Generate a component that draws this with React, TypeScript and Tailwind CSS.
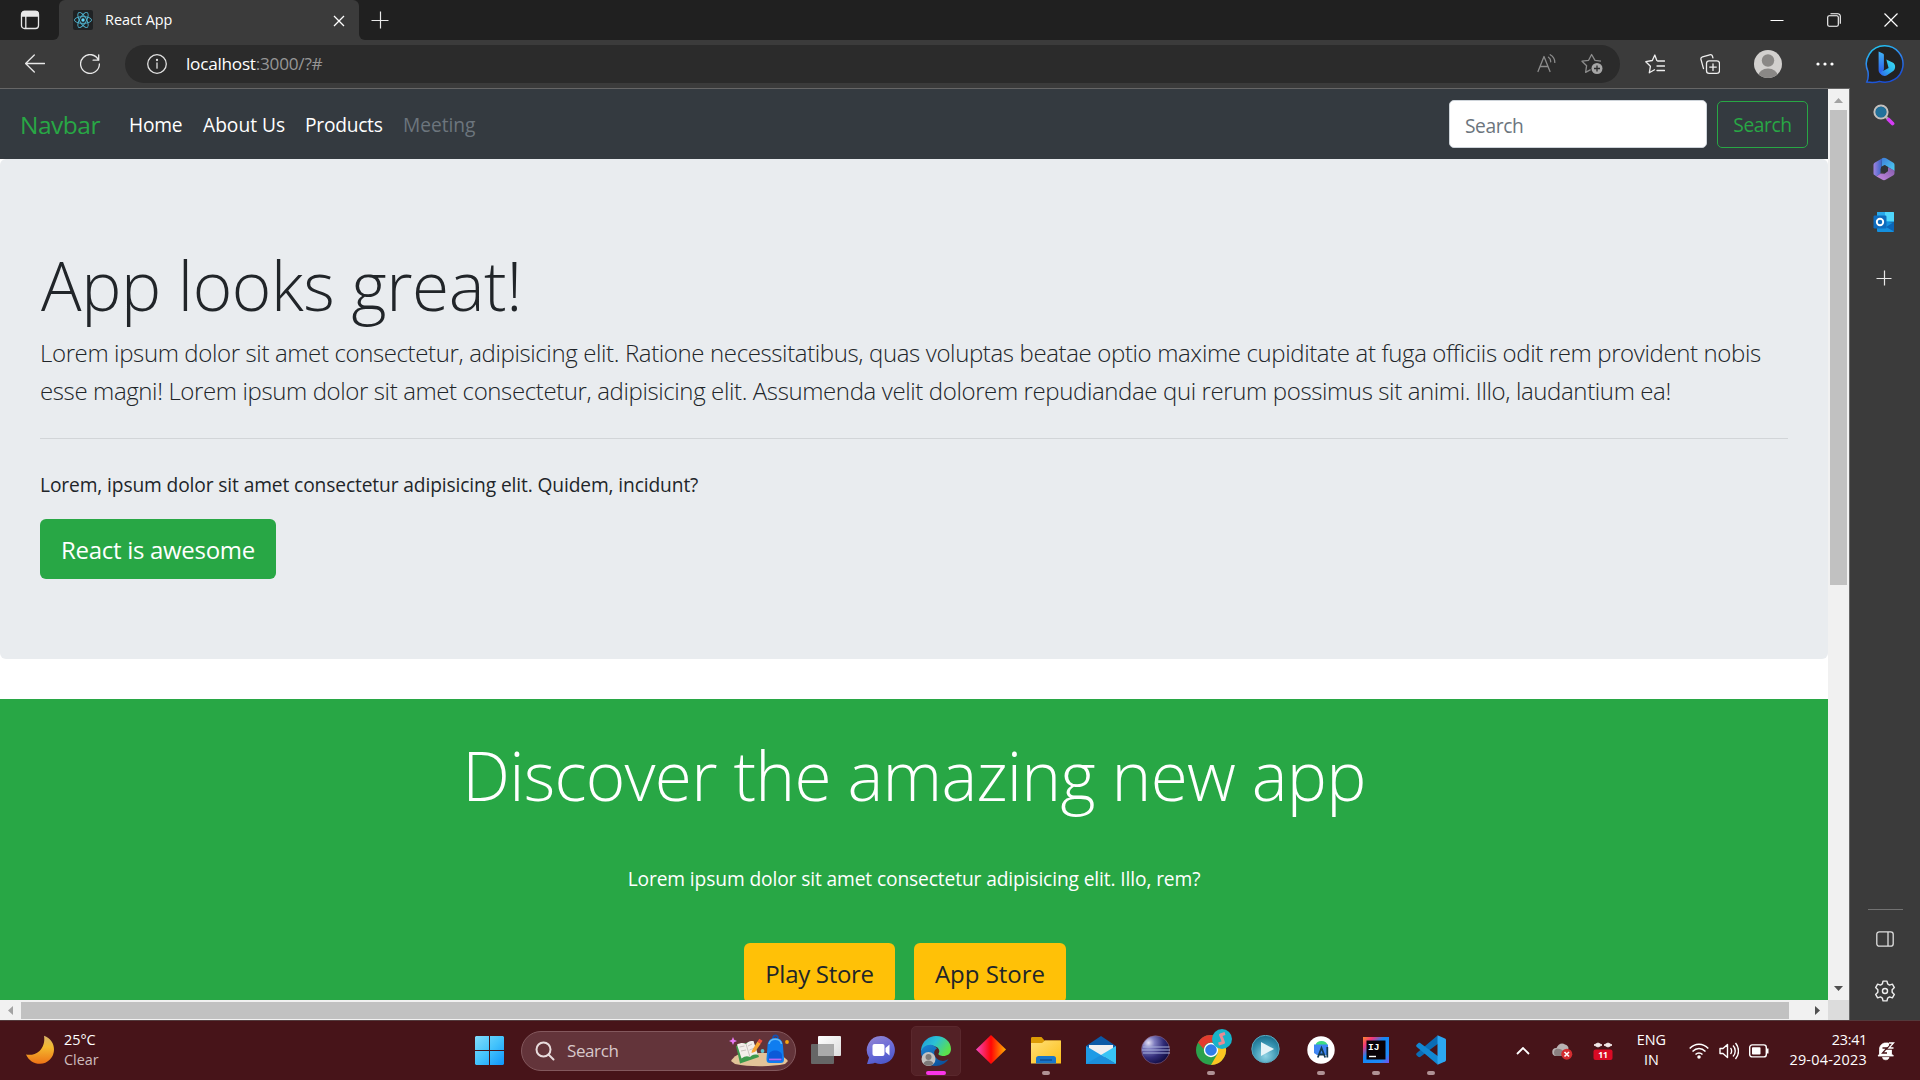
import React from 'react';

type P = { children?: React.ReactNode; className?: string };

/* Line-drawn icon on a 20px grid */
function Line({ children, className = 'size-5 text-white' }: P) {
  return (
    <svg viewBox="0 0 20 20" fill="none" stroke="currentColor" strokeWidth="1.3" strokeLinecap="round" strokeLinejoin="round" className={`shrink-0 ${className}`}>
      {children}
    </svg>
  );
}

function TitleBar() {
  return (
    <header className="flex h-10 shrink-0 bg-[#3b3b3b]">
      <div className="flex w-[59px] items-center rounded-br-[6px] bg-[#202020] pl-[20px]">
        <Line className="size-5 text-[#e8e8e8]">
          <rect x="1.500" y="1.500" width="17" height="17" rx="3" />
          <path d="M2 3.500a2 2 0 012-2h12a2 2 0 012 2V6H2z" fill="currentColor" />
          <path d="M5.800 6v12" />
        </Line>
      </div>
      <div className="w-[300px] bg-[#202020]">
        <div className="flex h-full items-center rounded-t-[6px] bg-[#3b3b3b] pr-[14px] pl-[14px]">
          <svg viewBox="0 0 20 20" className="size-5">
            <rect width="20" height="20" rx="2" fill="#1f2224" />
            <g fill="none" stroke="#4fb3cf" strokeWidth=".9">
              <ellipse cx="10" cy="10" rx="8.600" ry="3.400" />
              <ellipse cx="10" cy="10" rx="8.600" ry="3.400" transform="rotate(60 10 10)" />
              <ellipse cx="10" cy="10" rx="8.600" ry="3.400" transform="rotate(120 10 10)" />
            </g>
            <circle cx="10" cy="10" r="1.700" fill="#61dafb" />
          </svg>
          <span className="ml-3 pb-[1px] text-[14.4px] leading-5 text-white">React App</span>
          <svg viewBox="0 0 12 12" className="mt-[1px] ml-auto size-3 stroke-white" strokeWidth="1.300">
            <path d="M1 1l10 10M11 1L1 11" />
          </svg>
        </div>
      </div>
      <div className="flex flex-1 items-center rounded-bl-[6px] bg-[#202020] pr-[22px] pb-[1px] pl-[12px]">
        <svg viewBox="0 0 18 18" className="size-[18px] stroke-[#e8e8e8]" strokeWidth="1.200">
          <path d="M9.500 .5v17M.5 9.500h17" />
        </svg>
        <div className="ml-auto flex items-center gap-[43px] text-white">
          <svg viewBox="0 0 14 14" className="size-[14px] stroke-white" strokeWidth="1"><path d="M.5 7.500h13" /></svg>
          <svg viewBox="0 0 14 14" className="size-[14px] fill-none stroke-white" strokeWidth="1.100">
            <rect x=".7" y="2.700" width="10.600" height="10.600" rx="1.500" />
            <path d="M3.500.7h7.300a2.500 2.500 0 012.500 2.500v7.600" />
          </svg>
          <svg viewBox="0 0 14 14" className="size-[14px] stroke-white" strokeWidth="1.200"><path d="M.5.5l13 13M13.500.5l-13 13" /></svg>
        </div>
      </div>
    </header>
  );
}

function Toolbar() {
  return (
    <div className="flex h-12 items-center bg-[#3b3b3b] pr-4 pl-[25px]">
      <Line className="size-5 text-[#e8e8e8]"><path d="M.6 9.500h19M9.300 1L.6 9.500 9.300 18" /></Line>
      <Line className="ml-[35px] size-5 text-[#e8e8e8]">
        <path d="M18.600 6.200A9.400 9.400 0 1019.400 10M18.700.8v5.400h-5.600" />
      </Line>
      <div className="ml-[25px] flex h-[38px] w-[1495px] items-center rounded-full bg-[#2b2b2b] pr-[17px] pl-[22px]">
        <Line className="size-5 text-[#e0e0e0]">
          <circle cx="10" cy="10" r="9.300" />
          <path d="M10 9v5.200" />
          <circle cx="10" cy="6" r=".5" fill="currentColor" />
        </Line>
        <p className="ml-[19px] text-[17.200px] leading-6 tracking-[-0.25px] text-white">
          localhost<span className="text-[#969696]">:3000/?#</span>
        </p>
        <Line className="ml-auto size-5 text-[#8c8c8c]">
          <path d="M1 17.500L7 2.500l6 15M3 12.500h8" />
          <path d="M11.500 3.200c1.600 1 2.300 2.600 2.200 4.600M13.200.8c3 1.700 4.600 4.300 4.600 7.600" />
        </Line>
        <svg viewBox="0 0 22 22" className="ml-[24px] size-[22px] fill-none stroke-[#8c8c8c]" strokeWidth="1.300" strokeLinejoin="round">
          <path d="M20 8.200l-6-.9L10.600 1.500 7.600 7.300l-6.600.9 4.600 4.500-1 6.700 5-2.800" />
          <circle cx="16" cy="15.500" r="5.500" fill="#a6a6a6" stroke="none" />
          <path d="M16 12.500v6M13 15.500h6" stroke="#2b2b2b" />
        </svg>
      </div>
      <div className="ml-[25px] flex items-center">
        <Line className="size-5 text-[#eee]">
          <path d="M13 7.200L11.800 6.500 9.800 1 7.300 6.500.8 7.700l4.600 4.600-1.100 6.500 5.200-3M13 7h6.500M12 12h7.500M12 16.500h7.500" />
        </Line>
        <Line className="ml-[35px] size-5 text-[#eee]">
          <rect x="6.500" y="6.800" width="13" height="12.500" rx="2.600" />
          <path d="M13 9.800v6.600M9.700 13.100h6.600M3.500 14.700L1 5.600a2.300 2.300 0 011.500-2.800L9.700.8a2.300 2.300 0 012.800 1.500l.4 1.500" />
        </Line>
        <svg viewBox="0 0 28 28" className="ml-[34px] size-7">
          <defs><clipPath id="avatar"><circle cx="14" cy="14" r="14" /></clipPath></defs>
          <g clipPath="url(#avatar)">
            <rect width="28" height="28" fill="#d2d0ce" />
            <circle cx="14" cy="10.500" r="6.200" fill="#8a8886" />
            <ellipse cx="14" cy="26" rx="9.800" ry="7.500" fill="#8a8886" />
          </g>
        </svg>
        <svg viewBox="0 0 18 4" className="ml-[34px] h-1 w-[18px] fill-white">
          <circle cx="2" cy="2" r="1.600" /><circle cx="9" cy="2" r="1.600" /><circle cx="16" cy="2" r="1.600" />
        </svg>
      </div>
    </div>
  );
}

function Navbar() {
  return (
    <nav className="flex h-[70px] items-center bg-[#343a40] px-5 text-[19.2px]">
      <a className="w-[79px] text-[24.5px] leading-[37px] tracking-[-0.5px] text-[#28a745]">Navbar</a>
      <div className="ml-[30px] flex gap-[20px] pt-[2px] leading-[30px] whitespace-nowrap text-white">
        <a className="w-[54px] tracking-[-0.2px]">Home</a>
        <a className="w-[82px]">About Us</a>
        <a className="w-[78px] tracking-[-0.25px]">Products</a>
        <a className="tracking-[-0.05px] text-[#6c757d]">Meeting</a>
      </div>
      <div className="ml-auto flex items-center gap-[10px]">
        <div className="h-[48px] w-[258px] rounded-[5px] border border-[#ced4da] bg-white px-[15px] pt-[2px] leading-[46px] tracking-[-0.4px] text-[#6c757d]">Search</div>
        <button className="h-[47px] w-[91px] rounded-[5px] border border-[#28a745] pt-[1px] leading-[43px] tracking-[-0.4px] text-[#28a745]">Search</button>
      </div>
    </nav>
  );
}

function Jumbotron() {
  return (
    <section className="h-[500px] rounded-[6px] bg-[#e9ecef] px-[40px] pt-[80px] text-[#212529]">
      <h1 className="h-[94px] pt-[4px] pl-[1px] text-[67.5px] leading-[84px] font-light tracking-[-0.4px]">App looks great!</h1>
      <div className="h-[105px] pt-[1px] text-[24px] leading-[37.5px] font-light whitespace-nowrap">
        <p className="tracking-[-0.372px]">Lorem ipsum dolor sit amet consectetur, adipisicing elit. Ratione necessitatibus, quas voluptas beatae optio maxime cupiditate at fuga officiis odit rem provident nobis</p>
        <p className="tracking-[-0.38px]">esse magni! Lorem ipsum dolor sit amet consectetur, adipisicing elit. Assumenda velit dolorem repudiandae qui rerum possimus sit animi. Illo, laudantium ea!</p>
      </div>
      <hr className="border-[#d2d5d8]" />
      <p className="mt-[31px] text-[19.2px] leading-[30px] tracking-[-0.12px]">Lorem, ipsum dolor sit amet consectetur adipisicing elit. Quidem, incidunt?</p>
      <button className="mt-[19px] h-[60px] w-[236px] rounded-[6px] bg-[#28a745] pt-[1px] text-[24px] leading-[58px] tracking-[-0.3px] text-white">React is awesome</button>
    </section>
  );
}

function Discover() {
  return (
    <section className="mt-[40px] h-[340px] bg-[#28a745] pt-[30px] text-center text-white">
      <h1 className="h-[134px] pt-[4px] text-[67.5px] leading-[84px] font-light tracking-[-0.75px]">Discover the amazing new app</h1>
      <p className="text-[19.2px] leading-[32px] tracking-[-0.12px]">Lorem ipsum dolor sit amet consectetur adipisicing elit. Illo, rem?</p>
      <div className="mt-[48px] flex justify-center text-[24px] leading-[59px] text-[#212529]">
        <button className="mr-[19px] h-[60px] w-[151px] rounded-[6px] bg-[#ffc107] pt-[1px] tracking-[-0.3px]">Play Store</button>
        <button className="mr-[18px] h-[60px] w-[152px] rounded-[6px] bg-[#ffc107] pt-[1px] tracking-[-0.02px]">App Store</button>
      </div>
    </section>
  );
}

function VerticalScroll() {
  return (
    <div className="flex w-[21px] flex-col items-center bg-[#f1f1f1] pr-[1px]">
      <svg viewBox="0 0 9 5" className="mt-[9px] mb-[7px] h-[5px] w-[9px] fill-[#a3a3a3]"><path d="M4.500 0L9 5H0z" /></svg>
      <div className="h-[475px] w-[17px] bg-[#c1c1c1]" />
      <svg viewBox="0 0 9 5" className="mt-auto mb-[9px] h-[5px] w-[9px] fill-[#505050]"><path d="M4.500 5L9 0H0z" /></svg>
    </div>
  );
}

function HorizontalScroll() {
  return (
    <div className="flex h-[20px] bg-[#f1f1f1]">
      <div className="flex w-[1828px] items-center">
        <svg viewBox="0 0 5 9" className="mr-[8px] ml-[8px] h-[9px] w-[5px] fill-[#a3a3a3]"><path d="M0 4.500L5 0v9z" /></svg>
        <div className="h-[17px] w-[1768px] bg-[#c1c1c1]" />
        <svg viewBox="0 0 5 9" className="ml-[26px] h-[9px] w-[5px] fill-[#505050]"><path d="M5 4.500L0 0v9z" /></svg>
      </div>
      <div className="flex-1 bg-[#dcdcdc]" />
    </div>
  );
}

function Sidebar() {
  return (
    <aside className="flex w-[70px] flex-col items-center bg-[#3b3b3b] pt-[4px]">
      <svg viewBox="0 0 40 40" className="size-10">
        <defs>
          <linearGradient id="ring" x1="0" y1="0" x2=".4" y2="1"><stop offset="0" stopColor="#1fd3ee" /><stop offset=".5" stopColor="#2f86f0" /><stop offset="1" stopColor="#1a4fd6" /></linearGradient>
          <linearGradient id="bing" x1="0" y1="0" x2="0" y2="1"><stop offset="0" stopColor="#3fb4f6" /><stop offset="1" stopColor="#2a56e8" /></linearGradient>
          <linearGradient id="bing2" x1="1" y1="0" x2="0" y2="1"><stop offset="0" stopColor="#3de0f0" /><stop offset=".5" stopColor="#2cb5ee" /><stop offset="1" stopColor="#2f62ec" /></linearGradient>
        </defs>
        <path d="M20 1.800a18.200 18.200 0 11-5.500 35.600c-3.500 1.300-9 1.300-12.700.7 1.500-3 1.700-6.600 1.200-10.500A18.200 18.200 0 0120 1.800z" fill="#222" stroke="url(#ring)" strokeWidth="1.500" />
        <path d="M13.600 7.500l4.300 2c.7.300 1 .8 1 1.500v14.200L17 30.500c-2-.6-3.400-2-3.400-4.300z" fill="url(#bing)" />
        <path d="M21.300 15.500l6.300 3.100c1.800 1 2.700 2.500 2.500 4.700-.1 1.800-1 3.200-2.600 4.300l-5.500 3.700c-2 1.200-4.800.5-6-1l-.9-1.700 8.500-4.500z" fill="url(#bing2)" />
      </svg>
      <svg viewBox="0 0 22 22" className="mt-[20px] mr-[2px] size-[22px]">
        <path d="M15.500 15.500l4 4" stroke="#d53cf5" strokeWidth="3.800" strokeLinecap="round" />
        <path d="M12.500 12.500l2 2" stroke="#aaa" strokeWidth="2.500" />
        <circle cx="8" cy="8" r="6.600" fill="#1f6287" stroke="#c4c0be" strokeWidth="2" />
        <circle cx="8" cy="8" r="5.200" fill="#22719b" />
      </svg>
      <svg viewBox="0 0 22 24" className="mt-[31px] mr-[2px] h-[24px] w-[22px]">
        <defs>
          <linearGradient id="mA" x1="0" y1="0" x2="1" y2="1"><stop offset="0" stopColor="#3e7bd9" /><stop offset="1" stopColor="#4bd0f2" /></linearGradient>
          <linearGradient id="mB" x1="0" y1="0" x2="1" y2="0"><stop offset="0" stopColor="#a083e0" /><stop offset="1" stopColor="#3463c8" /></linearGradient>
          <linearGradient id="mC" x1="0" y1="1" x2="1" y2="0"><stop offset="0" stopColor="#c78be2" /><stop offset="1" stopColor="#8058a8" /></linearGradient>
        </defs>
        <path d="M9 1.300c1.300-.7 2.700-.7 4 0l7 4.100c1 .6 1.500 1.400 1.500 2.600V14L12 8.200 8.500 10z" fill="url(#mA)" />
        <path d="M9 1.400L8.500 10 7.500 12v4.500l-4 3-2-1.500C.8 18 .5 17 .5 16V8c0-1.200.6-2 1.500-2.600z" fill="url(#mB)" />
        <path d="M21.500 13.500V16c0 1.200-.5 2-1.500 2.600l-7 4c-1.300.7-2.700.7-4 0L3.500 19.500l4-3 4 .3 3-2.300V10z" fill="url(#mC)" />
        <path d="M8 10l3.500-2 3.500 2v4l-3.500 2.300L8 14z" fill="#303338" />
      </svg>
      <svg viewBox="0 0 22 22" className="mt-[30px] mr-[2px] size-[22px]">
        <path d="M4 1h16a1 1 0 011 1v9H4z" fill="#28a8ea" />
        <path d="M12 1h8a1 1 0 011 1v8h-9z" fill="#4fd6fb" />
        <path d="M4 10l17 1.500V20a1 1 0 01-1 1H5a1 1 0 01-1-1z" fill="#1490df" />
        <path d="M21 11v9.500L13 16z" fill="#0a65b8" />
        <rect x=".5" y="4.500" width="13" height="13" rx="1.200" fill="#0f6cbd" />
        <circle cx="7" cy="11" r="3.200" fill="none" stroke="#fff" strokeWidth="1.900" />
      </svg>
      <svg viewBox="0 0 16 16" className="mt-[37px] mr-[2px] size-4 stroke-[#e8e8e8]" strokeWidth="1.200"><path d="M8.500 .5v15M.5 8.500h15" /></svg>
      <div className="mt-auto h-px w-[35px] bg-[#727272]" />
      <svg viewBox="0 0 18 16" className="mt-[21px] h-4 w-[18px] fill-none stroke-[#e0e0e0]" strokeWidth="1.300">
        <rect x=".8" y=".8" width="16.400" height="14.400" rx="2.500" /><path d="M12 1v14" />
      </svg>
      <Line className="mt-[33px] mb-[18px] size-[22px] text-[#eee]">
        <path d="M8.200 1h3.600l.6 2.600 1.700 1 2.600-.8 1.800 3.100-2 1.900v2.400l2 1.900-1.800 3.100-2.600-.8-1.700 1-.6 2.600H8.200l-.6-2.600-1.700-1-2.600.8-1.800-3.100 2-1.900V8.800l-2-1.900 1.800-3.100 2.600.8 1.700-1z" />
        <circle cx="10" cy="10" r="2.300" />
      </Line>
    </aside>
  );
}

function TaskItem({ children, run, active }: { children: React.ReactNode; run?: boolean; active?: boolean }) {
  return (
    <div className="flex w-[55px] justify-center">
      <div className={active ? 'flex h-[50px] w-[50px] flex-col items-center rounded-[5px] border border-[#5a282d] bg-[#532126] pt-[8px]' : 'flex h-[50px] w-[50px] flex-col items-center pt-[9px]'}>
        {children}
        {active && <div className="mt-[4px] h-1 w-5 rounded-full bg-[#fb35e8]" />}
        {run && <div className="mt-[4px] h-1 w-2 rounded-full bg-[#b09295]" />}
      </div>
    </div>
  );
}

function Taskbar() {
  const s = 'size-[32px]';
  return (
    <footer className="flex h-[60px] shrink-0 items-center border-t border-[#533a3c] bg-[#471419] text-[14.4px] leading-5 text-white">
      <div className="flex w-[475px] items-center pl-[25px]">
        <svg viewBox="0 0 30 30" className="mb-[2px] size-[30px]">
          <defs><linearGradient id="moon" x1="0" y1="0" x2="0" y2="1"><stop offset="0" stopColor="#d9b36a" /><stop offset=".4" stopColor="#f3b92f" /><stop offset="1" stopColor="#ee7316" /></linearGradient></defs>
          <path d="M19 .8C25.500 3 29 8.500 29 14.500A14.200 14.200 0 0115 28.800C9 28.800 3.500 25.500 1 19.500c4.500 1 9.500 0 13.500-3.500 4-3.800 5.500-9.500 4.500-15.200z" fill="url(#moon)" />
        </svg>
        <div className="ml-[9px] pb-[2px]"><p>25°C</p><p className="text-[#cdbcbd]">Clear</p></div>
      </div>
      <svg viewBox="0 0 29 29" className="size-[29px]">
        <defs><linearGradient id="win" x1="0" y1="0" x2="1" y2="1"><stop offset="0" stopColor="#83dcfb" /><stop offset=".5" stopColor="#43c3fc" /><stop offset="1" stopColor="#0f95fb" /></linearGradient></defs>
        <path d="M1 0h13v14H0V1zM15 0h13l1 1v13H15zM0 15h14v14H1l-1-1zM15 15h14v13l-1 1H15z" fill="url(#win)" />
      </svg>
      <div className="ml-[17px] flex h-[40px] w-[275px] items-center rounded-full border border-[#83585d] bg-[#63343a] pr-[6px] pl-[13px]">
        <svg viewBox="0 0 20 20" className="size-5 fill-none stroke-[#e8dcdd]" strokeWidth="2"><circle cx="8.500" cy="8.500" r="7" /><path d="M13.500 13.500l5 5" strokeLinecap="round" /></svg>
        <span className="ml-[12px] text-[17px] leading-6 tracking-[-0.4px] text-[#d8c8ca]">Search</span>
        <svg viewBox="0 0 60 34" className="ml-auto h-[34px] w-[60px]">
          <path d="M2 27c3-5 8-8 14-8h24c9 0 15 3 19 8l-3 3c-15 3-36 3-50 0z" fill="#e3c398" />
          <path d="M7 12l17-5 6 16-19 6.500z" fill="#3d9a4c" />
          <path d="M8 10.500c4-2 6-2 9-.5 2-2.500 4-3 7.500-3l4.500 14c-4-1-6 0-8 2-3-1.500-5-1-8.500 1.500z" fill="#f2eeea" />
          <path d="M17 10l4 13M10.500 13l5-1M12 17l5-1M19 12l4-2M20.500 16l5-2" stroke="#c3bcb8" strokeWidth=".9" />
          <path d="M23 16.500l5.500-9 3.200 2.200-5.500 8L22.500 19z" fill="#f7a632" /><path d="M28.500 7.500l1.800-2.800 3.200 2-1.800 3z" fill="#f0533e" />
          <path d="M4 3l1.200 2.800L8 7 5.200 8.200 4 11 2.800 8.200 0 7l2.800-1.200z" fill="#e578f0" />
          <circle cx="33.500" cy="17" r="1.900" fill="#5cc3cf" /><circle cx="58" cy="8" r="1.900" fill="#f5a60c" />
          <path d="M44 4c0-3.500 5-3.500 5 0" fill="none" stroke="#174fae" strokeWidth="1.800" />
          <path d="M38.500 12c0-11 15.500-11 15.500 0l1 13c0 3-1 4-3.500 4H41c-2.500 0-3.500-1-3.500-4z" fill="#0f7df0" />
          <path d="M40 10c1-6.500 11.500-6.500 12.500 0" fill="none" stroke="#64baf8" strokeWidth="1.500" />
          <path d="M39.500 21c1-6 12.500-6 13.500 0v6H39.500z" fill="#0b5ad8" /><path d="M40 25.500h12.500" stroke="#b36af5" strokeWidth="1.800" />
        </svg>
      </div>
      <div className="ml-[2px] flex">
        <TaskItem>
          <svg viewBox="0 0 32 32" className={s}>
            <defs><linearGradient id="tv" x1="0" y1="0" x2="1" y2="1"><stop offset="0" stopColor="#fff" /><stop offset="1" stopColor="#ddd" /></linearGradient></defs>
            <rect x="1" y="9" width="23" height="20" rx="1" fill="#666" /><rect x="8" y="1" width="23" height="20" rx="1" fill="url(#tv)" /><path d="M8 9h16v12H8z" fill="#aaa" />
          </svg>
        </TaskItem>
        <TaskItem>
          <svg viewBox="0 0 32 32" className={s}>
            <defs><linearGradient id="chat" x1=".3" y1="0" x2=".7" y2="1"><stop offset="0" stopColor="#8f83d2" /><stop offset=".5" stopColor="#6a6bd8" /><stop offset="1" stopColor="#4a57c8" /></linearGradient></defs>
            <path d="M16 1a14 14 0 11-6 26.700c-2.500 1-5.500 1.300-8 1.300l2-6.500A14 14 0 0116 1z" fill="url(#chat)" />
            <rect x="7.500" y="9" width="12" height="12" rx="2" fill="#fff" /><path d="M20.500 13l4-3.500v11l-4-3.500z" fill="#fff" />
          </svg>
        </TaskItem>
        <TaskItem active>
          <svg viewBox="0 0 32 32" className={s}>
            <defs>
              <linearGradient id="ed" x1="0" y1="0" x2="1" y2=".5"><stop offset="0" stopColor="#1e96d8" /><stop offset=".5" stopColor="#2bc1d5" /><stop offset="1" stopColor="#5be04c" /></linearGradient>
              <linearGradient id="ed2" x1="0" y1="0" x2=".6" y2="1"><stop offset="0" stopColor="#1a86d6" /><stop offset="1" stopColor="#0c539c" /></linearGradient>
            </defs>
            <path d="M1 15C2 6 9 1 16 1c9 0 15 6 15 13 0 5-4 7-7.500 7-3 0-5.500-1-5-2.500C20 17 20 12.500 14 11 9 9.500 3 12 1 17z" fill="url(#ed)" />
            <path d="M1 17c1-5 6-8 11-7 2 .5 4 2 5 3.500-5 2-3 10 3 12 4 1 6 0 8.500-1.500C26 28 21 31 16 31 7 31 1 24 1 17z" fill="url(#ed2)" />
            <circle cx="8.500" cy="24" r="7" fill="#c4c3c2" /><circle cx="8.500" cy="22" r="3" fill="#7d7b7a" /><path d="M3.500 28.500c1.500-4 8.500-4 10 0-3 3-7 3-10 0z" fill="#7d7b7a" />
          </svg>
        </TaskItem>
        <TaskItem>
          <svg viewBox="0 0 32 32" className={s}>
            <defs><linearGradient id="dia" x1="0" y1="0" x2="1" y2="0"><stop offset="0" stopColor="#f547c2" /><stop offset=".5" stopColor="#ff0505" /><stop offset="1" stopColor="#ffb300" /></linearGradient></defs>
            <path d="M16 0L31 14.500 16 29 1 14.500z" fill="url(#dia)" />
          </svg>
        </TaskItem>
        <TaskItem run>
          <svg viewBox="0 0 32 32" className={s}>
            <defs><linearGradient id="fo" x1="0" y1="0" x2="1" y2="1"><stop offset="0" stopColor="#ffdf78" /><stop offset="1" stopColor="#fcbf17" /></linearGradient></defs>
            <path d="M1 3.500C1 2.500 1.500 2 2.500 2h9l3 3.500h15c1 0 1.500.5 1.500 1.500v5H1z" fill="#dc9b05" />
            <path d="M1 8h11l3-2.500h16v23H1z" fill="url(#fo)" />
            <path d="M6 28.500v-5c0-1.500 1-2.500 2.500-2.500h15c1.500 0 2.500 1 2.500 2.500v5z" fill="#1876c9" /><path d="M10 25h12" stroke="#0d4f94" strokeWidth="1.500" />
          </svg>
        </TaskItem>
        <TaskItem>
          <svg viewBox="0 0 32 32" className={s}>
            <path d="M1 11L16 1l15 10v2H1z" fill="#0b59a6" /><path d="M4 10h24v7L16 25 4 17z" fill="#eeeef0" />
            <path d="M1 11l30 18H1z" fill="#1f9be6" /><path d="M31 11v18L16 20z" fill="#38c4f5" /><path d="M1 29l15-9 15 9z" fill="#1c8fdc" />
          </svg>
        </TaskItem>
        <TaskItem>
          <svg viewBox="0 0 32 32" className={s}>
            <defs><radialGradient id="ec" cx=".25" cy=".25" r=".9"><stop offset="0" stopColor="#e3e0f4" /><stop offset=".25" stopColor="#7e7cbf" /><stop offset=".6" stopColor="#312c78" /><stop offset="1" stopColor="#080434" /></radialGradient></defs>
            <circle cx="15.500" cy="14.800" r="14" fill="url(#ec)" stroke="#8b6484" strokeWidth=".6" />
            <path d="M3 12h26.500M2 15h28M3 18h27" stroke="#a9b2dc" strokeWidth="1.100" />
          </svg>
        </TaskItem>
        <TaskItem run>
          <div className="relative size-[32px]">
            <svg viewBox="0 0 32 32" className={s}>
              <circle cx="16" cy="15" r="15" fill="#2ba24c" />
              <path d="M3 7.500A15 15 0 0129 7.500H16c-4 0-7 3-7.300 6.500z" fill="#e33b2e" />
              <path d="M29 7.500a15 15 0 01-13 22.500l6.500-11.200C24 14.500 22 9.500 18 7.500z" fill="#fcc521" />
              <circle cx="16" cy="15" r="7.200" fill="#fff" /><circle cx="16" cy="15" r="5.800" fill="#2f7de9" />
            </svg>
            <svg viewBox="0 0 20 20" className="absolute -top-[6px] -right-[5px] size-5">
              <circle cx="10" cy="10" r="10" fill="#17b3c9" />
              <path d="M13 4.500L8.500 6l1.800 4 1.200 3.500-5 1.500" fill="none" stroke="#e88b93" strokeWidth="3" strokeLinejoin="round" />
            </svg>
          </div>
        </TaskItem>
        <TaskItem>
          <svg viewBox="0 0 32 32" className={s}>
            <defs><radialGradient id="pl" cx=".5" cy=".75" r=".7"><stop offset="0" stopColor="#8fd3e4" /><stop offset=".7" stopColor="#328eac" /><stop offset="1" stopColor="#1d718f" /></radialGradient></defs>
            <circle cx="15.500" cy="14" r="13.700" fill="url(#pl)" stroke="#5ba9bf" /><path d="M11 7l13 7-13 7z" fill="#e4f3f7" />
          </svg>
        </TaskItem>
        <TaskItem run>
          <svg viewBox="0 0 32 32" className={s}>
            <circle cx="16" cy="15" r="13.700" fill="#fff" />
            <path d="M10.500 10.500a6 4.500 0 0112 0z" fill="#3ddc84" /><path d="M9 9.500h14V20H12l-3-2z" fill="#3f86f3" />
            <path d="M12.800 22.500L16.500 13l3.700 9.500M14.300 19.500h4.500" stroke="#123a55" strokeWidth="1.800" fill="none" /><path d="M22.300 12v10.500" stroke="#123a55" strokeWidth="1.800" />
          </svg>
        </TaskItem>
        <TaskItem run>
          <svg viewBox="0 0 32 32" className={s}>
            <defs><linearGradient id="ij" x1="0" y1="0" x2="1" y2="1"><stop offset="0" stopColor="#fc8a2a" /><stop offset=".2" stopColor="#f4347b" /><stop offset=".42" stopColor="#1487f5" /><stop offset=".8" stopColor="#1d8af7" /><stop offset="1" stopColor="#7a4ff0" /></linearGradient></defs>
            <rect x="3" y="2" width="26" height="26" fill="url(#ij)" /><rect x="6.500" y="5.500" width="19" height="19" fill="#080208" />
            <text x="8" y="15" fill="#fff" className="font-['Liberation_Mono'] text-[9.500px] font-bold">IJ</text><path d="M9 21.500h7" stroke="#fff" strokeWidth="1.400" />
          </svg>
        </TaskItem>
        <TaskItem run>
          <svg viewBox="0 0 32 32" className={s}>
            <path d="M22.500.5L1.800 18c-1 1-.8 1.600 0 2.500l1.400 1.200c.8.600 1.500.600 2.300 0L24 8z" fill="#0b6cb5" /><path d="M22.500 29.500L1.800 12c-1-1-.8-1.600 0-2.500l1.400-1.200c.8-.6 1.500-.6 2.300 0L24 22z" fill="#1287d2" />
            <path d="M22.500.3L30 3.500c.7.300 1 .8 1 1.500v20c0 .7-.3 1.200-1 1.500l-7.500 3.200z" fill="#2ca7f2" />
          </svg>
        </TaskItem>
      </div>

      <div className="ml-auto flex items-center pr-[24px] text-center">
        <svg viewBox="0 0 14 8" className="mr-[22px] h-2 w-[14px] fill-none stroke-white" strokeWidth="1.800"><path d="M1 7l6-6 6 6" /></svg>
        <svg viewBox="0 0 22 18" className="mr-[19px] h-[18px] w-[22px]">
          <path d="M4 14a4 4 0 01.5-8C6 2 10 0 13 2.500c2 .5 3.500 2 3.500 4L12 14z" fill="#b9b2b2" /><path d="M4 7c3-1 6 0 8 3l-2 4H4a4 4 0 010-7z" fill="#8a8080" />
          <circle cx="14.800" cy="12.200" r="5.500" fill="#d42d30" /><path d="M12.500 10l4.500 4.500M17 10l-4.500 4.500" stroke="#fff" strokeWidth="1.600" />
        </svg>
        <svg viewBox="0 0 20 18" className="h-[18px] w-5">
          <path d="M1 3l4-2 4 2-4 2zM11 3l4-2 4 2-4 2z" fill="#f2e9e9" stroke="#f2e9e9" strokeLinejoin="round" />
          <rect x=".5" y="7.500" width="19" height="10.500" rx="2" fill="#d90a24" />
          <text x="10" y="15.800" textAnchor="middle" fill="#fff" className="text-[8.500px] font-bold">11</text>
        </svg>
        <div className="w-[79px] pr-[3px] pb-[1px]"><p>ENG</p><p>IN</p></div>
        <svg viewBox="0 0 20 16" className="-ml-[3px] h-4 w-5 fill-none stroke-white" strokeWidth="1.500">
          <path d="M.7 5.500C6-.3 14-.3 19.300 5.500M3.500 8.500c4-4 9-4 13 0M6.500 11.500c2-2 5-2 7 0" /><circle cx="10" cy="14" r="1" fill="#fff" />
        </svg>
        <svg viewBox="0 0 20 18" className="ml-[10px] h-[18px] w-5 fill-none stroke-white" strokeWidth="1.400" strokeLinejoin="round">
          <path d="M1 6.500h3L8.500 2.500v13L4 11.500H1zM11.500 6c1.500 1.500 1.500 4.500 0 6M14 3.500c3 3 3 8 0 11M16.500 1c4 4.500 4 11.500 0 16" />
        </svg>
        <svg viewBox="0 0 20 14" className="ml-[10px] h-[14px] w-5">
          <rect x=".7" y=".9" width="16.600" height="12" rx="2.500" fill="none" stroke="#fff" strokeWidth="1.400" /><rect x="3" y="3.200" width="8.500" height="7.400" rx=".8" fill="#fff" /><path d="M18.500 4.500v5" stroke="#fff" strokeWidth="2" />
        </svg>
        <div className="ml-[20px] pb-[2px] text-right"><p className="tracking-[-0.3px]">23:41</p><p className="tracking-[0.25px]">29-04-2023</p></div>
        <svg viewBox="0 0 20 20" className="ml-[9px] size-5">
          <path d="M2 15l1.500-2V8.500c0-4 3-6.500 6-6.500h3l3 6v5l2 2z M6.500 16.500h6.500c-.5 3-6 3-6.500 0z" fill="#fff" stroke="#fff" strokeWidth=".8" strokeLinejoin="round" />
          <path d="M6.500 7h4.500l-4.500 5H11" fill="none" stroke="#471419" strokeWidth="1.300" /><path d="M13 2h4.500L13 7h4.500" fill="none" stroke="#471419" strokeWidth="3.400" /><path d="M13 2h4.500L13 7h4.500" fill="none" stroke="#fff" strokeWidth="1.300" />
        </svg>
      </div>
    </footer>
  );
}

export default function App() {
  return (
    <div className="flex h-[1080px] w-[1920px] flex-col overflow-hidden font-['Open_Sans','Noto_Sans',sans-serif]">
      <TitleBar />
      <div className="flex h-[980px]">
        <div className="w-[1850px]">
          <Toolbar />
          <div className="border-t border-r border-[#666]">
            <div className="flex h-[911px]">
              <main className="h-full w-[1828px] overflow-hidden bg-white">
                <Navbar />
                <Jumbotron />
                <Discover />
              </main>
              <VerticalScroll />
            </div>
            <HorizontalScroll />
          </div>
        </div>
        <Sidebar />
      </div>
      <Taskbar />
    </div>
  );
}
